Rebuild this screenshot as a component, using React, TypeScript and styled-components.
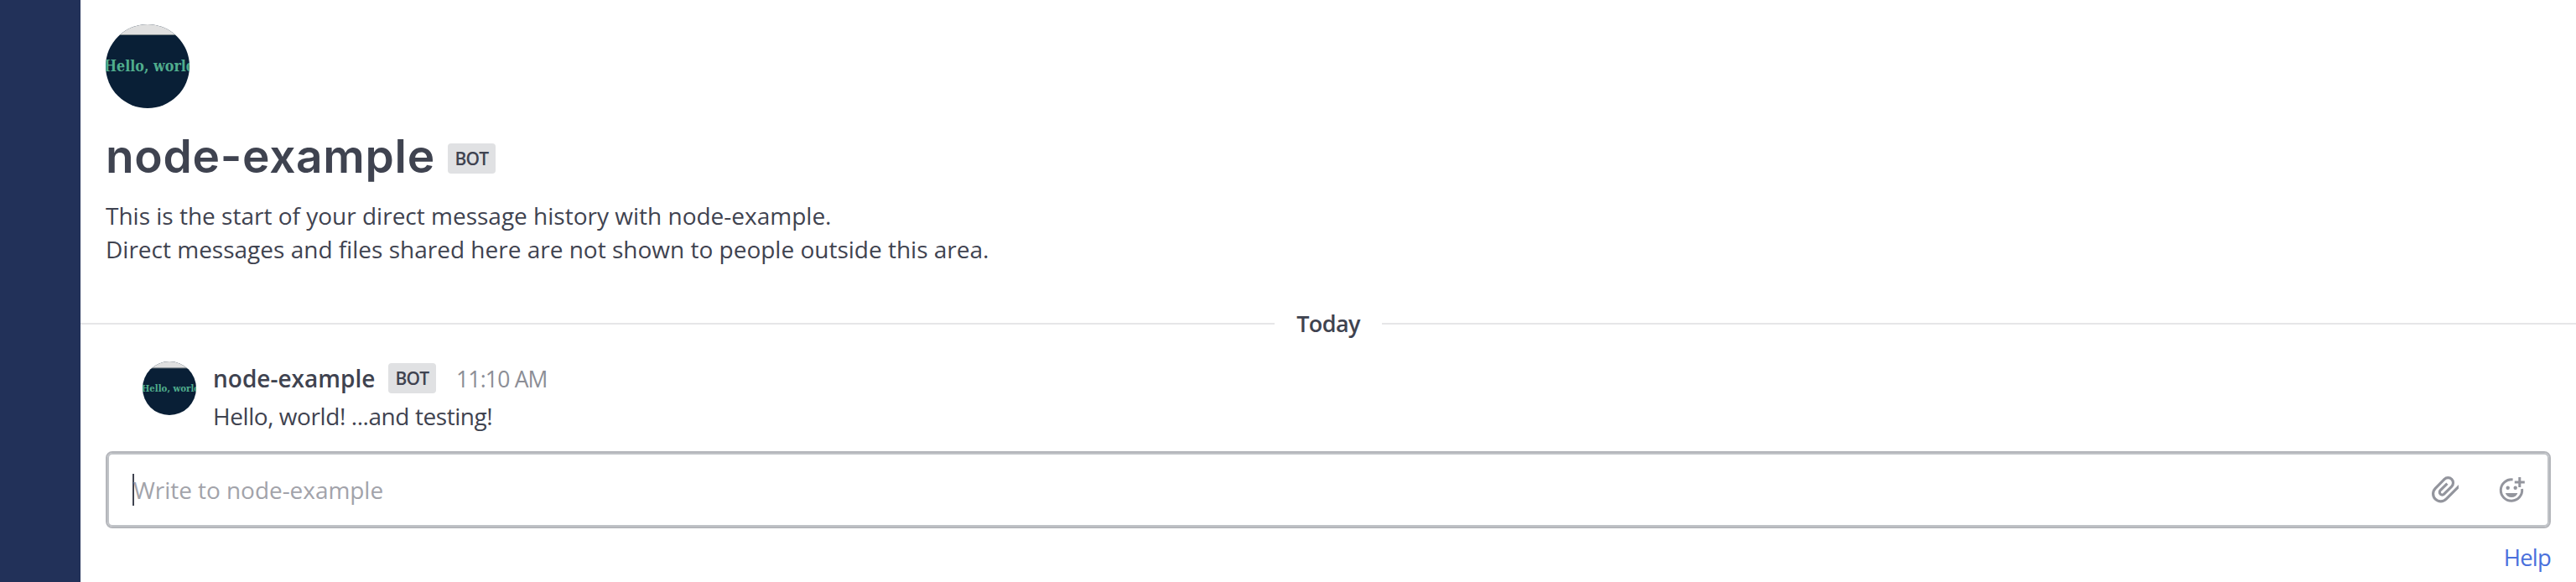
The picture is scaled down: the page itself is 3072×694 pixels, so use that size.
import React from "react";
import styled, { createGlobalStyle } from "styled-components";

const GlobalStyle = createGlobalStyle`
  * { box-sizing: border-box; }
  body {
    margin: 0;
    background: #ffffff;
    color: #3f4350;
    font-family: "Open Sans", sans-serif;
    font-size: 28px;
    line-height: 40px;
  }
`;

const Page = styled.div`
  display: flex;
  width: 100%;
  height: 694px;
  overflow: hidden;
`;

const Sidebar = styled.aside`
  flex: none;
  width: 96px;
  background: #223159;
`;

const Main = styled.main`
  flex: 1;
  min-width: 0;
  display: flex;
  flex-direction: column;
`;

const Intro = styled.section`
  display: flex;
  flex-direction: column;
  height: 317px;
  padding: 29px 30px 0;
`;

const AvatarSvg = styled.svg<{ $size: number }>`
  display: block;
  flex: none;
  width: ${(p) => p.$size}px;
  height: ${(p) => p.$size}px;
  border-radius: 50%;
`;

const TitleRow = styled.div`
  display: flex;
  align-items: center;
  height: 60px;
  margin: 27px 0 21px;
`;

const Title = styled.h1`
  margin: 0;
  width: 408px;
  font-family: Inter, sans-serif;
  font-size: 55px;
  line-height: 60px;
  font-weight: 600;
  letter-spacing: 0.7px;
  white-space: nowrap;
`;

const BotTag = styled.span<{ $drop?: number }>`
  display: flex;
  align-items: center;
  justify-content: center;
  width: 57px;
  height: 36px;
  margin-top: ${(p) => p.$drop ?? 0}px;
  border-radius: 4px;
  background: #e0e1e3;
  font-size: 21px;
  line-height: 36px;
  font-weight: 600;
  letter-spacing: -0.8px;
`;

const Description = styled.p`
  margin: 0;
  white-space: pre-line;
`;

const DateDivider = styled.div`
  display: flex;
  align-items: center;
  height: 40px;
  margin-top: 49px;
`;

const Rule = styled.span`
  flex: 1;
  height: 2px;
  background: #e6e6e8;
`;

const DateLabel = styled.span`
  width: 128px;
  text-align: center;
  font-size: 27px;
  font-weight: 600;
  letter-spacing: -0.6px;
`;

const Post = styled.article`
  display: flex;
  gap: 20px;
  height: 112px;
  margin-top: 20px;
  padding: 5px 30px 0 74px;
`;

const PostBody = styled.div`
  display: flex;
  flex-direction: column;
`;

const PostHeader = styled.header`
  display: flex;
  align-items: center;
  height: 40px;
`;

const Author = styled.strong`
  width: 209px;
  font-weight: 600;
`;

const Time = styled.time`
  margin-left: 24px;
  padding-top: 2px;
  font-size: 26.5px;
  letter-spacing: -0.8px;
  color: #8c8e96;
`;

const PostText = styled.p`
  margin: 5px 0 0;
  font-size: 28px;
  letter-spacing: -0.43px;
`;

const Composer = styled.div`
  display: flex;
  align-items: center;
  height: 92px;
  margin: 0 30px;
  padding: 0 28px;
  border: 2px solid #b4b6bb;
  border-radius: 8px;
  box-shadow: inset 0 0 0 2px #c0c3c7;
`;

const Caret = styled.span`
  width: 2px;
  height: 38px;
  margin: 0 -1px 0 2px;
  background: #3f4350;
`;

const Placeholder = styled.span`
  flex: 1;
  color: #a2a3aa;
  letter-spacing: -0.05px;
`;

const Tools = styled.div`
  display: flex;
  gap: 48px;
  color: #93959d;
`;

const Icon = styled.svg`
  display: block;
  width: 32px;
  height: 32px;
`;

const Footer = styled.footer`
  display: flex;
  justify-content: flex-end;
  padding: 15px 30px 0;
`;

const HelpLink = styled.a`
  color: #4a70dc;
  font-size: 27.5px;
  letter-spacing: -0.8px;
`;

function Avatar({ size }: { size: number }) {
  return (
    <AvatarSvg $size={size} viewBox="0 0 100 100">
      <rect width="100" height="100" fill="#091f36" />
      <rect width="100" height="12" fill="#e0e0e0" />
      <rect y="12" width="100" height="1" fill="#7c8789" />
      <text
        x="-2"
        y="56"
        textLength="116"
        lengthAdjust="spacingAndGlyphs"
        fontFamily='"DejaVu Serif", serif'
        fontSize="18"
        fontWeight="bold"
        fill="#50ad8d"
      >
        Hello, world!
      </text>
    </AvatarSvg>
  );
}

function PaperclipIcon() {
  return (
    <Icon viewBox="0 0 32 32" fill="none" stroke="currentColor" strokeWidth="3.2">
      <path
        transform="translate(10.7 20.7) rotate(-45)"
        d="M24 9.1H0A9.1 9.1 0 0 1 0 -9.1H15.3A6.1 6.1 0 0 1 15.3 3.1H2.5A3.1 3.1 0 0 1 2.5 -3.1H14"
      />
    </Icon>
  );
}

function EmojiPlusIcon() {
  return (
    <Icon viewBox="0 0 32 32" fill="none" stroke="currentColor" strokeWidth="3">
      <path d="M16.6 3.9A12.7 12.7 0 1 0 27.6 15" />
      <path d="M24.8 1V13M18.8 7H30.8" />
      <circle cx="10.7" cy="13.7" r="2.2" fill="currentColor" stroke="none" />
      <circle cx="19.7" cy="13.7" r="2.2" fill="currentColor" stroke="none" />
      <path d="M7.8 20H22.4A7.8 7.8 0 0 1 7.8 20Z" fill="currentColor" stroke="none" />
    </Icon>
  );
}

export default function App() {
  return (
    <>
      <GlobalStyle />
      <Page>
        <Sidebar />
        <Main>
          <Intro>
            <Avatar size={100} />
            <TitleRow>
              <Title>node-example</Title>
              <BotTag $drop={6}>BOT</BotTag>
            </TitleRow>
            <Description>
              {"This is the start of your direct message history with node-example.\nDirect messages and files shared here are not shown to people outside this area."}
            </Description>
          </Intro>
          <DateDivider>
            <Rule />
            <DateLabel>Today</DateLabel>
            <Rule />
          </DateDivider>
          <Post>
            <Avatar size={64} />
            <PostBody>
              <PostHeader>
                <Author>node-example</Author>
                <BotTag>BOT</BotTag>
                <Time>11:10 AM</Time>
              </PostHeader>
              <PostText>Hello, world! ...and testing!</PostText>
            </PostBody>
          </Post>
          <Composer>
            <Caret />
            <Placeholder>Write to node-example</Placeholder>
            <Tools>
              <PaperclipIcon />
              <EmojiPlusIcon />
            </Tools>
          </Composer>
          <Footer>
            <HelpLink>Help</HelpLink>
          </Footer>
        </Main>
      </Page>
    </>
  );
}
